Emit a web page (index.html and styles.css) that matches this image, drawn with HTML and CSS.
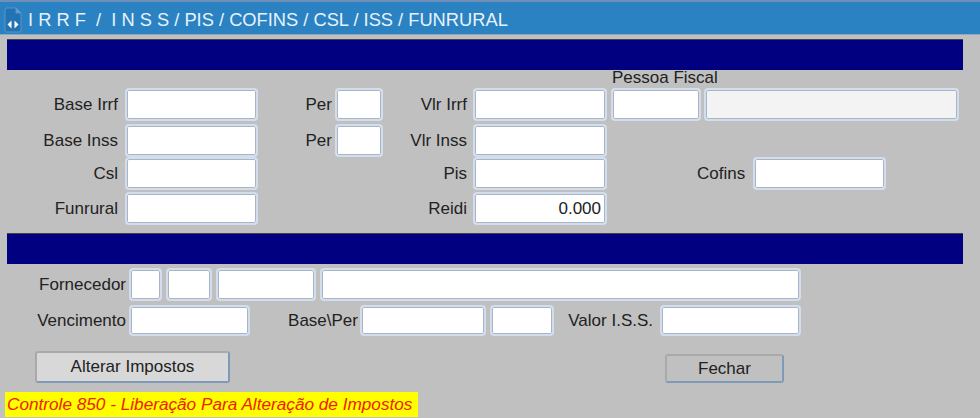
FILE: index.html
```html
<!DOCTYPE html>
<html lang="en">

<head>
    <meta charset="UTF-8">
    <meta name="viewport" content="width=device-width, initial-scale=1.0">
    <title>IRRF</title>

    <link rel="stylesheet" href="styles.css">
</head>

<body>
    <div class="title-bar">
        <svg class="title-icon" width="18" height="26" viewBox="0 0 18 26">
            <path d="M1 3 Q1 1 3 1 H12 L17 6 V24 Q17 25 16 25 H2 Q1 25 1 24 Z" fill="#2273b4" stroke="#5f93c4" />
            <path d="M12 1 V6 H17" fill="#5f9fd4" stroke="#5f93c4" />
            <path d="M7.5 13.5 L3.5 17.5 L7.5 21.5 Z M10.5 13.5 L14.5 17.5 L10.5 21.5 Z" fill="#fff" />
        </svg>
        <span class="title-text">I R R F  /  I N S S / PIS / COFINS / CSL / ISS / FUNRURAL</span>
    </div>

    <div class="section-bar"></div>

    <div class="top-label">Pessoa Fiscal</div>

    <div class="tax-grid">
        <label class="row-start">Base Irrf</label>
        <input type="text">
        <label class="per">Per</label>
        <input type="text">
        <label>Vlr Irrf</label>
        <input type="text">
        <input type="text" class="person-code">
        <input type="text" class="readonly">

        <label class="row-start">Base Inss</label>
        <input type="text">
        <label class="per">Per</label>
        <input type="text">
        <label>Vlr Inss</label>
        <input type="text">

        <label class="row-start">Csl</label>
        <input type="text">
        <label class="mid-label">Pis</label>
        <input type="text">
        <div class="cofins">
            <label>Cofins</label>
            <input type="text">
        </div>

        <label class="row-start">Funrural</label>
        <input type="text">
        <label class="mid-label">Reidi</label>
        <input type="text" class="number" value="0.000">
    </div>

    <div class="section-bar"></div>

    <div class="iss-block">
        <div class="iss-row">
            <label class="w-first">Fornecedor</label>
            <input type="text" class="w-33">
            <input type="text" class="w-46">
            <input type="text" class="w-100">
            <input type="text" class="w-481">
        </div>
        <div class="iss-row">
            <label class="w-first">Vencimento</label>
            <input type="text" class="w-121">
            <label class="w-base">Base\Per</label>
            <input type="text" class="w-126">
            <input type="text" class="w-64">
            <label class="w-valor">Valor I.S.S.</label>
            <input type="text" class="w-141">
        </div>
    </div>

    <div class="actions">
        <button class="btn-main">Alterar Impostos</button>
        <button class="btn-close">Fechar</button>
    </div>

    <div class="status">Controle 850 - Liberação Para Alteração de Impostos</div>
</body>

</html>
```

FILE: styles.css
```css
* {
    margin: 0;
    padding: 0;
    box-sizing: border-box;
}

body {
    width: 980px;
    height: 418px;
    overflow: hidden;
    background-color: #c0c0c0;
    font-family: "Liberation Sans", Arial, sans-serif;
    font-size: 17px;
    color: #222;
    display: flex;
    flex-direction: column;
}

.title-bar {
    height: 35px;
    flex-shrink: 0;
    display: flex;
    align-items: center;
    gap: 6px;
    padding: 4px 0 0 4px;
    background-color: #2a82c3;
    border-top: 2px solid #6d8fb8;
    border-bottom: 1px solid #8fa9c2;
    color: #e8f2fa;
}

.title-text {
    font-size: 18.3px;
    white-space: pre;
}

.section-bar {
    height: 31px;
    flex-shrink: 0;
    margin: 4px 17px 0 7px;
    background-color: #000080;
    border-top: 1px solid #444;
}

.top-label {
    height: 18px;
    flex-shrink: 0;
    padding-left: 612px;
    line-height: 15px;
}

input {
    height: 33px;
    min-width: 0;
    width: 100%;
    background-color: #fff;
    border: 2px solid #d2deee;
    border-radius: 4px;
    box-shadow: inset 0 0 0 1px #aab4c2;
    font-family: inherit;
    font-size: 17px;
    color: #222;
    padding: 0 4px;
    outline: none;
}

label {
    text-align: right;
    white-space: nowrap;
}

.tax-grid {
    display: grid;
    grid-template-columns: 125px 133px 77px 48px 90px 134px 4px 90px 3px 255px;
    grid-template-rows: 36px 33px 35px 33px;
    align-items: start;
    height: 141px;
    flex-shrink: 0;
    padding-right: 23px;
}

.tax-grid label {
    line-height: 33px;
}

.tax-grid > label {
    padding-right: 6px;
}

.tax-grid > label.per {
    padding-right: 3px;
}

.tax-grid > label.row-start {
    grid-column: 1;
    padding-right: 7px;
}

.person-code {
    grid-column: 8;
}

.tax-grid > input.readonly {
    grid-column: 10;
    background-color: #f3f3f3;
}

.mid-label {
    grid-column: 5;
}

.cofins {
    grid-column: 7 / 11;
    display: flex;
    gap: 8px;
    padding-left: 90px;
}

.cofins label {
    width: 48px;
}

.cofins input {
    width: 133px;
}

.number {
    text-align: right;
}

.iss-block {
    display: flex;
    flex-direction: column;
    gap: 4px;
    flex-shrink: 0;
    margin-top: 4px;
}

.iss-row {
    display: flex;
    align-items: center;
    gap: 4px;
}

.iss-row input {
    flex-shrink: 0;
}

.iss-row:last-child input {
    height: 31px;
}

.w-first { width: 126px; margin-right: -1px; }
.w-base { width: 104px; margin-right: -2px; }
.w-valor { width: 98px; padding-right: 3px; }
.w-33 { width: 33px; }
.w-46 { width: 46px; }
.w-100 { width: 100px; }
.w-481 { width: 481px; }
.w-121 { width: 121px; }
.w-126 { width: 126px; }
.w-64 { width: 64px; }
.w-141 { width: 141px; }

.actions {
    display: flex;
    align-items: flex-end;
    justify-content: space-between;
    height: 32px;
    flex-shrink: 0;
    margin-top: 15px;
    padding: 0 196px 0 35px;
}

button {
    font-family: inherit;
    font-size: 17px;
    color: #222;
    border: 2px solid #a9a9a9;
    border-right-color: #7f9ab8;
    border-bottom-color: #7f9ab8;
    border-radius: 3px;
}

.btn-main {
    width: 195px;
    height: 32px;
    background-color: #d8d8d8;
}

.btn-close {
    width: 119px;
    height: 29px;
    background-color: #c0c0c0;
}

.status {
    align-self: flex-start;
    flex-shrink: 0;
    height: 25px;
    margin: 9px 0 0 5px;
    padding: 0 2px;
    width: 413px;
    line-height: 25px;
    background-color: #ffff00;
    color: #f02000;
    font-size: 17.2px;
    font-style: italic;
    white-space: nowrap;
}
```
